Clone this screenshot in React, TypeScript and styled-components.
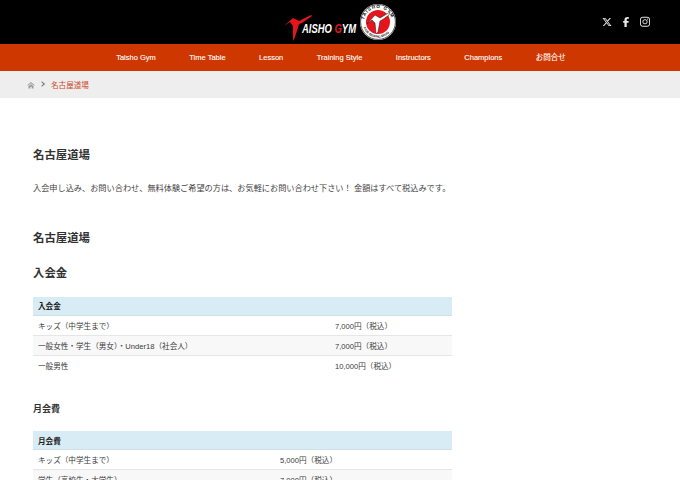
import React from "react";
import styled, { createGlobalStyle } from "styled-components";
import { FaXTwitter, FaFacebookF, FaInstagram } from "react-icons/fa6";

const Global = createGlobalStyle`
  html, body { margin: 0; padding: 0; background: #fff; height: 480px; overflow: hidden; }
  body { font-family: "Liberation Sans", "Noto Sans CJK JP", sans-serif; color: #333; }
`;

const Page = styled.div`
  width: 680px;
  height: 480px;
  overflow: hidden;
`;

const Header = styled.header`
  height: 44px;
  background: #000;
  display: grid;
  grid-template-columns: 1fr auto 1fr;
  align-items: center;
`;

const Socials = styled.div`
  grid-column: 3;
  display: flex;
  justify-content: flex-end;
  align-items: center;
  gap: 9px;
  padding-right: 30px;
`;

const SocialLink = styled.a<{ $size: number }>`
  display: flex;
  width: 10px;
  justify-content: center;
  color: #e8e8e8;
  font-size: ${(p) => p.$size}px;
`;

const LogoSvg = styled.svg`
  grid-column: 2;
  display: block;
  margin-left: 1px;
`;

const Nav = styled.nav`
  height: 27px;
  background: #cf3700;
  display: flex;
  justify-content: center;
  align-items: center;
  gap: 33.5px;
  padding-left: 2px;
`;

const NavItem = styled.a`
  color: #fff;
  font-size: 7.5px;
  line-height: 12px;
  -webkit-text-stroke: 0.1px #fff;
  white-space: nowrap;
`;

const Breadcrumb = styled.div`
  height: 27px;
  background: #eeeeee;
  display: flex;
  align-items: center;
  padding-left: 27px;
`;

const Chevron = styled.span`
  width: 3px;
  height: 3px;
  border-top: 0.7px solid #777;
  border-right: 0.7px solid #777;
  transform: rotate(45deg);
  margin: -2px 7px 0 5px;
`;

const Current = styled.span`
  color: #c9482a;
  font-size: 7.6px;
`;

const Main = styled.main`
  padding: 49px 0 0 33px;
  width: 419px;
`;

const Heading = styled.h2<{ $top: number; $size?: number }>`
  margin: ${(p) => p.$top}px 0 0;
  font-size: ${(p) => p.$size ?? 11.4}px;
  line-height: 16px;
  font-weight: 700;
  color: #333;
  white-space: nowrap;
`;

const Lead = styled.p`
  margin: 19.5px 0 0;
  font-size: 8.19px;
  line-height: 12px;
  color: #444;
  white-space: nowrap;
`;

const Table = styled.table<{ $top: number }>`
  width: 419px;
  margin-top: ${(p) => p.$top}px;
  border-collapse: collapse;
  table-layout: fixed;
  font-size: 7.6px;
  color: #3a3a3a;
`;

const HeadCell = styled.th`
  height: 18px;
  padding: 0 0 0 5px;
  background: #d8ecf5;
  border-bottom: 1px solid #cfdfe7;
  text-align: left;
  font-weight: 700;
  color: #1f1f1f;
`;

const Row = styled.tr`
  &:nth-child(even) { background: #f8f8f8; }
`;

const Cell = styled.td`
  height: 19px;
  padding: 0 0 0 5px;
  border-bottom: 1px solid #e6e6e6;
  white-space: nowrap;
`;

const LastCell = styled(Cell)`
  border-bottom: none;
`;

const Logo = () => (
  <LogoSvg width="113" height="42" viewBox="0 0 113 42">
    <path d="M0 25 L9 17 L15 20 L27 14 L28 15 L18 22 L15 23 L11 36 L9 40 L9 25 L6 21 Z" fill="#e8141c" />
    <text x="18" y="32" fontFamily="'Liberation Sans', sans-serif" fontSize="12.5" fontWeight="700" fontStyle="italic" fill="#fff" textLength="54" lengthAdjust="spacingAndGlyphs">
      AISHO <tspan fill="#e8141c">G</tspan>YM
    </text>
    <circle cx="94" cy="21" r="18" fill="#fff" />
    <circle cx="94" cy="21" r="17.4" fill="none" stroke="#111" strokeWidth="0.7" />
    <path id="ringTop" d="M80 21 A14 14 0 0 1 108 21" fill="none" />
    <text fontFamily="'Liberation Sans', sans-serif" fontSize="4.6" fontWeight="700" fill="#111" letterSpacing="0.9">
      <textPath href="#ringTop" startOffset="5%">TAISHO GYM</textPath>
    </text>
    <path id="ringBottom" d="M79 25 A15.5 15.5 0 0 0 109 25" fill="none" />
    <text fontFamily="'Liberation Sans', sans-serif" fontSize="3.2" fontWeight="700" fill="#111">
      <textPath href="#ringBottom" startOffset="4%">KICK BOXING DOJO</textPath>
    </text>
    <circle cx="94" cy="21" r="12" fill="#e8141c" />
    <path d="M83 23 L91 14 L96 17 L106 11 L105 14 L98 19 L96 20 L94 31 L92 33 L91 22 L88 19 Z" fill="#fff" stroke="#111" strokeWidth="0.5" />
  </LogoSvg>
);

const HomeIcon = () => (
  <svg width="8" height="8" viewBox="0 0 16 16" fill="#999">
    <path d="M8 2 L0.5 8.5 L2 9.6 L8 4.6 L14 9.6 L15.5 8.5 Z M3 10.5 L8 6.4 L13 10.5 V15 H9.5 V11.5 H6.5 V15 H3 Z" />
  </svg>
);

const navItems = ["Taisho Gym", "Time Table", "Lesson", "Training Style", "Instructors", "Champions", "お問合せ"];

const FeeTable = ({ top, title, col, rows }: { top: number; title: string; col: number; rows: [string, string][] }) => (
  <Table $top={top}>
    <colgroup>
      <col style={{ width: col }} />
      <col />
    </colgroup>
    <thead>
      <tr>
        <HeadCell colSpan={2}>{title}</HeadCell>
      </tr>
    </thead>
    <tbody>
      {rows.map(([a, b], i) => {
        const C = i === rows.length - 1 ? LastCell : Cell;
        return (
          <Row key={a}>
            <C>{a}</C>
            <C>{b}</C>
          </Row>
        );
      })}
    </tbody>
  </Table>
);

export default function App() {
  return (
    <Page>
      <Global />
      <Header>
        <Logo />
        <Socials>
          <SocialLink $size={10}><FaXTwitter /></SocialLink>
          <SocialLink $size={10}><FaFacebookF /></SocialLink>
          <SocialLink $size={11.5}><FaInstagram /></SocialLink>
        </Socials>
      </Header>
      <Nav>
        {navItems.map((n) => (
          <NavItem key={n}>{n}</NavItem>
        ))}
      </Nav>
      <Breadcrumb>
        <HomeIcon />
        <Chevron />
        <Current>名古屋道場</Current>
      </Breadcrumb>
      <Main>
        <Heading $top={0}>名古屋道場</Heading>
        <Lead>入会申し込み、お問い合わせ、無料体験ご希望の方は、お気軽にお問い合わせ下さい！ 金額はすべて税込みです。</Lead>
        <Heading $top={35}>名古屋道場</Heading>
        <Heading $top={19.5}>入会金</Heading>
        <FeeTable
          top={15.5}
          title="入会金"
          col={297}
          rows={[
            ["キッズ（中学生まで）", "7,000円（税込）"],
            ["一般女性・学生（男女）・Under18（社会人）", "7,000円（税込）"],
            ["一般男性", "10,000円（税込）"],
          ]}
        />
        <Heading $top={26.5} $size={9}>月会費</Heading>
        <FeeTable
          top={14}
          title="月会費"
          col={242}
          rows={[
            ["キッズ（中学生まで）", "5,000円（税込）"],
            ["学生（高校生・大学生）", "7,000円（税込）"],
          ]}
        />
      </Main>
    </Page>
  );
}
